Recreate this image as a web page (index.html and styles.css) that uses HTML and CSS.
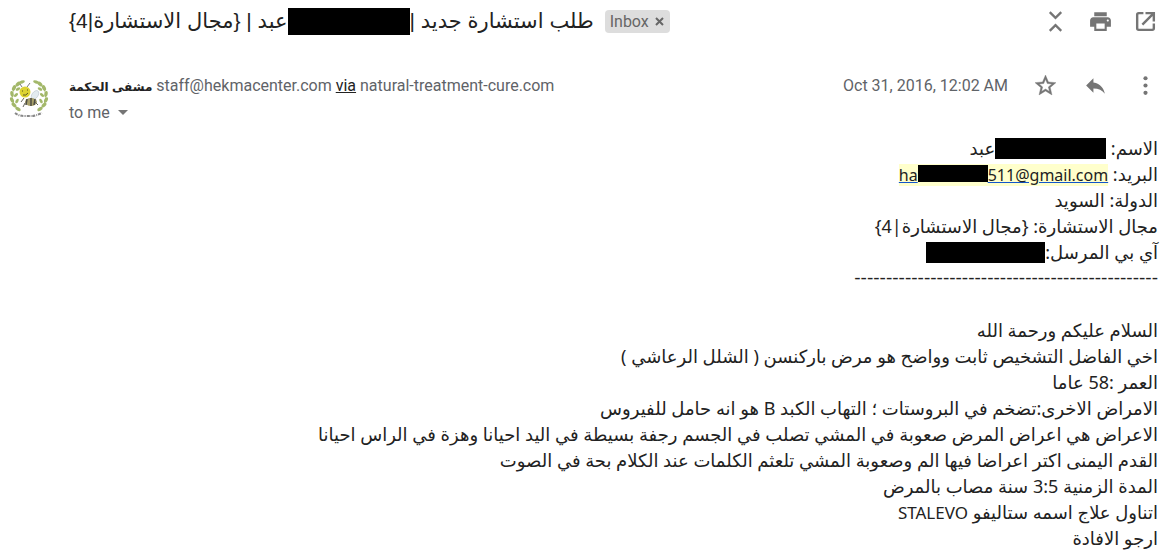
FILE: index.html
```
<!DOCTYPE html>
<html lang="en">

<head>
    <meta charset="UTF-8">
    <meta name="viewport" content="width=device-width, initial-scale=1.0">
    <title>طلب استشارة جديد</title>
    <link rel="stylesheet" href="styles.css">
</head>

<body>
    <main class="mail">
        <header class="subject-bar">
            <h1 class="subject" dir="rtl">طلب استشارة جديد |<span class="redacted redacted-subject"></span>عبد | {مجال الاستشارة|4}</h1>
            <div class="chip">
                <span>Inbox</span>
                <button type="button" class="chip-close" aria-label="Remove label Inbox">
                    <svg width="9" height="9" viewBox="0 0 9 9"><path d="M1 1l7 7M8 1L1 8" stroke="#666" stroke-width="2" /></svg>
                </button>
            </div>
            <div class="actions">
                <button type="button" class="icon" aria-label="Collapse all">
                    <svg viewBox="0 0 24 24"><path d="M6.500 3l5.500 5.500L17.500 3M6.500 21l5.500-5.500 5.500 5.500" fill="none" stroke="#757575" stroke-width="2.200" /></svg>
                </button>
                <button type="button" class="icon" aria-label="Print all">
                    <svg viewBox="0 0 24 24"><path d="M19 8H5c-1.660 0-3 1.340-3 3v6h4v4h12v-4h4v-6c0-1.660-1.340-3-3-3zm-3 11H8v-5h8v5zm3-7c-.55 0-1-.45-1-1s.45-1 1-1 1 .45 1 1-.45 1-1 1zm-1-9H6v4h12V3z" /></svg>
                </button>
                <button type="button" class="icon" aria-label="In new window">
                    <svg viewBox="0 0 24 24"><path d="M10 4H5.500Q4 4 4 5.500v13Q4 20 5.500 20h13q1.500 0 1.500-1.500V14M12 4h8v8M19 5L9 15" fill="none" stroke="#757575" stroke-width="2.300" /></svg>
                </button>
            </div>
        </header>

        <section class="sender">
            <svg class="avatar" viewBox="0 0 40 40" role="img" aria-label="مشفى الحكمة">
                <g fill="none" stroke="#b8c98a" stroke-width="1">
                    <path d="M13 4C1 9 0 25 11 33M27 4c12 5 13 21 2 29" />
                </g>
                <g fill="#a3b86a">
                    <ellipse cx="13" cy="4" rx="3" ry="1.500" transform="rotate(-20 13 4)" />
                    <ellipse cx="9" cy="6" rx="3" ry="1.800" transform="rotate(-45 9 6)" />
                    <ellipse cx="5" cy="10" rx="3" ry="1.800" transform="rotate(-65 5 10)" />
                    <ellipse cx="9" cy="11" rx="2.500" ry="1.400" transform="rotate(-30 9 11)" />
                    <ellipse cx="3" cy="16" rx="3" ry="1.700" transform="rotate(80 3 16)" />
                    <ellipse cx="7" cy="17" rx="2.500" ry="1.400" transform="rotate(-45 7 17)" />
                    <ellipse cx="3" cy="22" rx="3" ry="1.700" transform="rotate(65 3 22)" />
                    <ellipse cx="8" cy="23" rx="2.500" ry="1.400" transform="rotate(-60 8 23)" />
                    <ellipse cx="5" cy="27" rx="3" ry="1.700" transform="rotate(45 5 27)" />
                    <ellipse cx="9" cy="31" rx="3" ry="1.700" transform="rotate(30 9 31)" />
                    <ellipse cx="27" cy="4" rx="3" ry="1.500" transform="rotate(20 27 4)" />
                    <ellipse cx="31" cy="6" rx="3" ry="1.800" transform="rotate(45 31 6)" />
                    <ellipse cx="35" cy="10" rx="3" ry="1.800" transform="rotate(65 35 10)" />
                    <ellipse cx="31" cy="11" rx="2.500" ry="1.400" transform="rotate(30 31 11)" />
                    <ellipse cx="37" cy="16" rx="3" ry="1.700" transform="rotate(-80 37 16)" />
                    <ellipse cx="33" cy="17" rx="2.500" ry="1.400" transform="rotate(45 33 17)" />
                    <ellipse cx="37" cy="22" rx="3" ry="1.700" transform="rotate(-65 37 22)" />
                    <ellipse cx="32" cy="23" rx="2.500" ry="1.400" transform="rotate(60 32 23)" />
                    <ellipse cx="35" cy="27" rx="3" ry="1.700" transform="rotate(-45 35 27)" />
                    <ellipse cx="31" cy="31" rx="3" ry="1.700" transform="rotate(-30 31 31)" />
                </g>
                <ellipse cx="26" cy="17" rx="3" ry="5" fill="#e3ebef" stroke="#b9c4cb" stroke-width=".6" transform="rotate(35 26 17)" />
                <path d="M13 9l-2-3M18 9l3-4" stroke="#777" stroke-width="1" fill="none" />
                <circle cx="16" cy="14" r="5.500" fill="#ddd333" />
                <path d="M13 13h1M18 12h1M14 17q3 1 5-2" stroke="#5b5720" fill="none" />
                <ellipse cx="22" cy="24" rx="6" ry="4" fill="#a8a06a" />
                <path d="M18 21l-1 6M22 20v8M26 21l-1 6" stroke="#4d4d44" stroke-width="1.500" />
                <path d="M15 20l-3 4m4 1l-2 4m12-5l3 3" stroke="#66665c" stroke-width="1" />
                <path d="M6 35q4 3 9 3t8 0 10-3" fill="none" stroke="#888" stroke-width="2" stroke-dasharray="3 1 1 1" />
            </svg>
            <div class="sender-info">
                <div class="from"><bdi class="name">مشفى الحكمة</bdi> staff@hekmacenter.com <a class="via" href="#">via</a> natural-treatment-cure.com</div>
                <button type="button" class="recipient">to me
                    <svg width="10" height="5" viewBox="0 0 10 5"><path d="M0 0h10L5 5z" fill="#757575" /></svg>
                </button>
            </div>
            <time class="date" datetime="2016-10-31T00:02">Oct 31, 2016, 12:02 AM</time>
            <div class="actions">
                <button type="button" class="icon" aria-label="Star">
                    <svg viewBox="0 0 24 24"><path d="M22 9.240l-7.190-.62L12 2 9.190 8.630 2 9.240l5.460 4.730L5.820 21 12 17.270 18.180 21l-1.630-7.030L22 9.240zM12 15.400l-3.760 2.270 1-4.280-3.320-2.880 4.380-.38L12 6.100l1.710 4.040 4.380.38-3.320 2.880 1 4.280L12 15.400z" stroke="#757575" stroke-width=".4" /></svg>
                </button>
                <button type="button" class="icon" aria-label="Reply">
                    <svg viewBox="0 0 24 24"><path d="M10 9V5l-7 7 7 7v-4.100c5 0 8.500 1.600 11 5.100-1-5-4-10-11-11z" /></svg>
                </button>
                <button type="button" class="icon" aria-label="More">
                    <svg viewBox="0 0 24 24"><circle cx="12" cy="5" r="2" /><circle cx="12" cy="12" r="2" /><circle cx="12" cy="19" r="2" /></svg>
                </button>
            </div>
        </section>

        <article class="message" dir="rtl" lang="ar">
            <p>الاسم: <span class="redacted redacted-name"></span>عبد</p>
            <p>البريد: <a class="email" dir="ltr" href="#">ha<span class="redacted redacted-email"></span>511@gmail.com</a></p>
            <p>الدولة: السويد</p>
            <p>مجال الاستشارة: {مجال الاستشارة|4}</p>
            <p>آي بي المرسل:<span class="redacted redacted-ip"></span></p>
            <p class="divider">------------------------------------------------</p>
            <p><br></p>
            <p>السلام عليكم ورحمة الله</p>
            <p>اخي الفاضل التشخيص ثابت وواضح هو مرض باركنسن ( الشلل الرعاشي )</p>
            <p>العمر :58 عاما</p>
            <p>الامراض الاخرى:تضخم في البروستات ؛ التهاب الكبد B هو انه حامل للفيروس</p>
            <p>الاعراض هي اعراض المرض صعوبة في المشي تصلب في الجسم رجفة بسيطة في اليد احيانا وهزة في الراس احيانا</p>
            <p>القدم اليمنى اكتر اعراضا فيها الم وصعوبة المشي تلعثم الكلمات عند الكلام بحة في الصوت</p>
            <p>المدة الزمنية 3:5 سنة مصاب بالمرض</p>
            <p>اتناول علاج اسمه ستاليفو <span class="latin">STALEVO</span></p>
            <p>ارجو الافادة</p>
        </article>
    </main>
</body>

</html>
```
FILE: styles.css
```
body {
    margin: 0;
    background-color: #fff;
    color: #222;
    font-family: Roboto, "DejaVu Sans", sans-serif;
}

button {
    padding: 0;
    border: none;
    background: none;
    color: inherit;
    font: inherit;
    cursor: pointer;
}

.mail {
    padding: 0 13px 0 9px;
}

.subject-bar {
    display: flex;
    align-items: center;
    height: 42px;
    padding-left: 60px;
}

.subject {
    margin: 0;
    font-family: "Liberation Sans", "DejaVu Sans", sans-serif;
    font-size: 21px;
    font-weight: normal;
    line-height: 28px;
    white-space: nowrap;
}

.chip {
    display: flex;
    align-items: center;
    gap: 6px;
    height: 23px;
    margin-left: 11px;
    padding: 0 6px 0 5px;
    border-radius: 4px;
    background-color: #ddd;
    color: #666;
    font-size: 16px;
}

.chip-close {
    display: flex;
}

.actions {
    display: flex;
    gap: 25px;
    margin-left: auto;
}

.subject-bar .actions {
    gap: 20px;
}

.icon {
    width: 25px;
    height: 25px;
}

.icon svg {
    display: block;
    width: 25px;
    height: 25px;
    fill: #757575;
}

.sender {
    display: flex;
    align-items: flex-start;
    padding-top: 31px;
}

.sender .actions {
    margin-left: 25px;
}

.avatar {
    width: 40px;
    height: 40px;
    margin-top: 5px;
    margin-right: 20px;
}

.sender-info {
    flex: 1;
    color: #5f6368;
    font-size: 16px;
    line-height: 25px;
}

.name {
    color: #222;
    font-family: "Liberation Sans", "DejaVu Sans", sans-serif;
    font-size: 12px;
    font-weight: bold;
}

.via {
    color: #222;
}

.recipient {
    display: flex;
    align-items: center;
    gap: 8px;
}

.date {
    color: #5f6368;
    font-size: 16px;
    line-height: 25px;
}

.message {
    margin-top: 10px;
    font-family: "Noto Sans", "DejaVu Sans", sans-serif;
    font-size: 18px;
    line-height: 26px;
}

.message p {
    height: 26px;
    margin: 0;
}

.message .divider {
    font-family: "Liberation Sans", sans-serif;
    font-size: 19px;
}

.email {
    background-color: #ffc;
    color: #222;
    font-size: 16px;
    text-decoration-color: #15c;
}

.latin {
    font-size: 17px;
}

.redacted {
    display: inline-block;
    height: 21px;
    background-color: #000;
    vertical-align: -4px;
}

.redacted-subject {
    width: 122px;
    height: 27px;
    vertical-align: middle;
}

.redacted-name {
    width: 111px;
}

.redacted-email {
    width: 70px;
    height: 17px;
    vertical-align: -1px;
}

.redacted-ip {
    width: 119px;
}
```
